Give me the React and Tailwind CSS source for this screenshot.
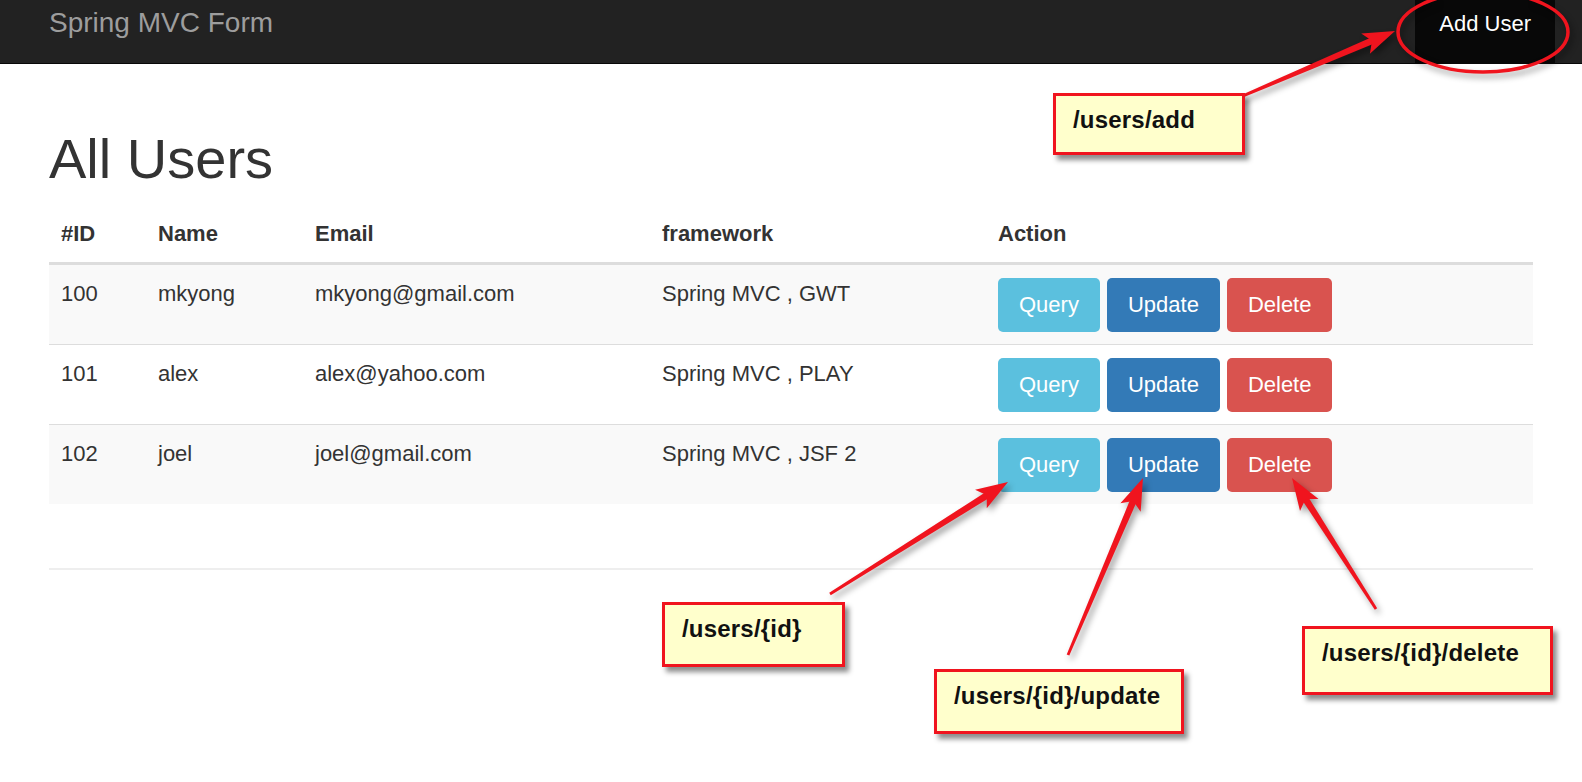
const users = [
  { id: 100, name: "mkyong", email: "mkyong@gmail.com", framework: "Spring MVC , GWT" },
  { id: 101, name: "alex", email: "alex@yahoo.com", framework: "Spring MVC , PLAY" },
  { id: 102, name: "joel", email: "joel@gmail.com", framework: "Spring MVC , JSF 2" },
];

// tapered annotation arrow, thin at the tail and wide at the head
function Arrow({ x1, y1, x2, y2 }) {
  const len = Math.hypot(x2 - x1, y2 - y1);
  const dx = (x2 - x1) / len;
  const dy = (y2 - y1) / len;
  const L = 32;
  const W = 11;
  const bx = x2 - dx * L;
  const by = y2 - dy * L;
  const nx = -dy;
  const ny = dx;
  const t = 1.4;
  const h = 3.4;
  const shaft = [
    [x1 + nx * t, y1 + ny * t],
    [bx + dx * 8 + nx * h, by + dy * 8 + ny * h],
    [bx + dx * 8 - nx * h, by + dy * 8 - ny * h],
    [x1 - nx * t, y1 - ny * t],
  ];
  const head = [
    [x2, y2],
    [bx + nx * W, by + ny * W],
    [bx + dx * 7, by + dy * 7],
    [bx - nx * W, by - ny * W],
  ];
  const fmt = (ps) => ps.map((p) => p.join(",")).join(" ");
  return (
    <g>
      <polygon points={fmt(shaft)} fill="#f0141e" />
      <polygon points={fmt(head)} fill="#f0141e" />
    </g>
  );
}

function Callout({ className, children }) {
  return (
    <div
      className={`absolute border-[3px] border-[#f0141e] bg-[#ffffcc] pl-[17px] pt-[10px] text-[24px] font-bold leading-[28px] tracking-[0.2px] text-[#111] shadow-[4px_5px_5px_rgba(0,0,0,0.45)] ${className}`}
    >
      {children}
    </div>
  );
}

function Btn({ color, children }) {
  return (
    <button
      type="button"
      className={`h-[54px] rounded-[5px] px-[21px] text-[22px] leading-none text-white ${color}`}
    >
      {children}
    </button>
  );
}

export default function App() {
  return (
    <div className="relative h-[782px] w-[1582px] overflow-hidden bg-white font-['Liberation_Sans',Arial,sans-serif] text-[#333]">
      <nav className="flex h-[64px] items-start justify-between border-b border-[#080808] bg-[#222] pl-[49px] pr-[27px]">
        <div className="pt-[7px] text-[28px] leading-[32px] text-[#9d9d9d]">Spring MVC Form</div>
        <div className="h-[63px] bg-[#080808] px-[24px] pt-[10px] text-[22px] leading-[28px] text-white">Add User</div>
      </nav>

      <div className="mx-auto w-[1484px]">
        <h1 className="mt-[64px] text-[56px] font-normal leading-[62px] text-[#333]">All Users</h1>

        <table className="mt-[15px] w-full table-fixed border-collapse text-left text-[22px] leading-[32px]">
          <thead>
            <tr className="border-b-[3px] border-[#ddd]">
              <th className="w-[97px] pb-[12px] pl-[12px] pt-[13px] font-bold">#ID</th>
              <th className="w-[157px] pb-[12px] pl-[12px] pt-[13px] font-bold">Name</th>
              <th className="w-[347px] pb-[12px] pl-[12px] pt-[13px] font-bold">Email</th>
              <th className="w-[336px] pb-[12px] pl-[12px] pt-[13px] font-bold">framework</th>
              <th className="pb-[12px] pl-[12px] pt-[13px] font-bold">Action</th>
            </tr>
          </thead>
          <tbody>
            {users.map((u, i) => (
              <tr
                key={u.id}
                className={`${i % 2 === 0 ? "bg-[#f9f9f9]" : "bg-white"} ${i > 0 ? "border-t border-[#ddd]" : ""}`}
              >
                <td className="pb-[12px] pl-[12px] pt-[13px] align-top">{u.id}</td>
                <td className="pb-[12px] pl-[12px] pt-[13px] align-top">{u.name}</td>
                <td className="pb-[12px] pl-[12px] pt-[13px] align-top">{u.email}</td>
                <td className="pb-[12px] pl-[12px] pt-[13px] align-top">{u.framework}</td>
                <td className="pb-[12px] pl-[12px] pt-[13px] align-top">
                  <div className="flex gap-[7px]">
                    <Btn color="bg-[#5bc0de]">Query</Btn>
                    <Btn color="bg-[#337ab7]">Update</Btn>
                    <Btn color="bg-[#d9534f]">Delete</Btn>
                  </div>
                </td>
              </tr>
            ))}
          </tbody>
        </table>

        <hr className="mt-[64px] border-t-2 border-[#eee]" />
      </div>

      {/* annotations */}
      <svg
        className="pointer-events-none absolute left-0 top-0 drop-shadow-[3px_4px_3px_rgba(0,0,0,0.4)]"
        width="1582"
        height="782"
        viewBox="0 0 1582 782"
      >
        <ellipse cx="1483" cy="32" rx="85" ry="40" fill="none" stroke="#f0141e" strokeWidth="3.5" />
        <Arrow x1={1238} y1={98} x2={1395} y2={31} />
        <Arrow x1={830} y1={594} x2={1008} y2={482} />
        <Arrow x1={1068} y1={655} x2={1143} y2={478} />
        <Arrow x1={1376} y1={609} x2={1292} y2={478} />
      </svg>

      <Callout className="left-[1053px] top-[93px] h-[62px] w-[192px]">/users/add</Callout>
      <Callout className="left-[662px] top-[602px] h-[65px] w-[183px]">/users/{"{id}"}</Callout>
      <Callout className="left-[934px] top-[669px] h-[65px] w-[250px]">/users/{"{id}"}/update</Callout>
      <Callout className="left-[1302px] top-[626px] h-[69px] w-[251px]">/users/{"{id}"}/delete</Callout>
    </div>
  );
}
